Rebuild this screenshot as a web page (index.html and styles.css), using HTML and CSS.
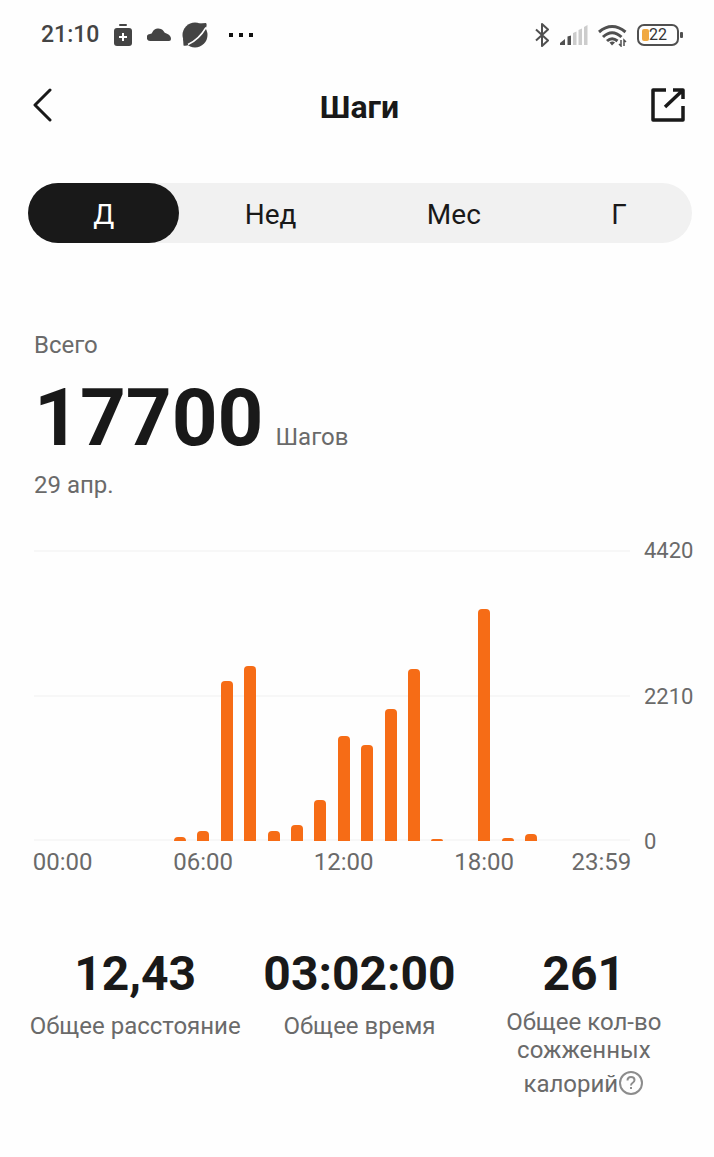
FILE: index.html
```html
<!DOCTYPE html>
<html lang="ru">
<head>
  <meta charset="UTF-8">
  <meta name="viewport" content="width=device-width, initial-scale=1.0">
  <title>Шаги</title>
  <link rel="stylesheet" href="styles.css">
</head>

<body>

  <div class="status-bar">
    <div class="status-left">
      <span class="time">21:10</span>
      <svg class="clip" width="18" height="22" viewBox="0 0 18 22">
        <rect x="5" y="0" width="8" height="2" rx="1" fill="#444"/>
        <rect x="0" y="4" width="18" height="18" rx="3" fill="#444"/>
        <path d="M9 9v8M5 13h8" stroke="#fff" stroke-width="2"/>
      </svg>
      <svg class="cloud" width="24" height="16" viewBox="0 0 24 16">
        <path d="M3.500 14a3.500 3.500 0 0 1-.5-7Q5 7 5.500 5A6.500 6.500 0 0 1 16.500 4Q17.500 6 19.500 6.500Q24 8 24 12Q24 14 22 14z" fill="#444"/>
      </svg>
      <svg width="26" height="26" viewBox="1 1 26 26">
        <circle cx="14" cy="14" r="12.500" fill="#444"/>
        <path d="M18 2.500l7-.5q1.500 1.500-.5 6zM2 17l.5 7.500q2 1 6-1z" fill="#444"/>
        <path d="M7 23.500Q18 18.500 25 6.500" fill="none" stroke="#fff" stroke-width="1.500"/>
      </svg>
      <svg class="dots" width="24" height="4" viewBox="0 0 24 4">
        <path d="M0 0h4v4H0zM10 0h4v4h-4zM20 0h4v4h-4z" fill="#111"/>
      </svg>
    </div>
    <div class="status-right">
      <svg width="16" height="24" viewBox="0 0 16 24">
        <path d="M2 6.500l12 11L8 23V1l6 5.500-12 11" fill="none" stroke="#505050" stroke-width="2" stroke-linejoin="round"/>
      </svg>
      <svg class="signal" width="28" height="20" viewBox="0 0 28 20">
        <path d="M0 20v-2l5-4v6zM7.500 11.500L11 10.500V20H7.500z" fill="#505050"/>
        <path d="M13 8l3.500-1.500V20H13zM18.500 5L22 3.500V20h-3.500zM24 2l3.500-2v20H24z" fill="#ccc"/>
      </svg>
      <svg class="wifi" width="29" height="23" viewBox="0 0 29 23">
        <g fill="none" stroke="#505050" stroke-width="3">
          <path d="M1 8Q14 -3 27.500 8"/>
          <path d="M5 13Q14 4.500 23.500 13"/>
          <path d="M9 17Q14 12.500 19.500 17"/>
        </g>
        <path d="M11.500 18.500q3-2 5.500 0L14 21.500z" fill="#505050"/>
        <path d="M23 16v6l-2-2M26 22v-6l2 2" fill="none" stroke="#505050" stroke-width="1.500"/>
      </svg>
      <span class="battery"><span class="battery-body"><span class="battery-level" style="width: 22%"></span><span class="battery-text">22</span></span></span>
    </div>
  </div>

  <header class="navbar">
    <button class="icon-button" type="button" aria-label="Назад">
      <svg width="20" height="34" viewBox="0 0 20 34">
        <path d="M17 2L2 17l15 15" fill="none" stroke="#191919" stroke-width="3" stroke-linecap="round" stroke-linejoin="round"/>
      </svg>
    </button>
    <h1>Шаги</h1>
    <button class="icon-button" type="button" aria-label="Поделиться">
      <svg width="34" height="34" viewBox="0 0 34 34">
        <path d="M15 2H2v30h30V18M22 2h10v9M32 2L14 19" fill="none" stroke="#191919" stroke-width="3.500" stroke-linejoin="round"/>
      </svg>
    </button>
  </header>

  <main>
    <nav class="tabs">
      <button class="tab active" type="button">Д</button>
      <button class="tab" type="button">Нед</button>
      <button class="tab" type="button">Мес</button>
      <button class="tab" type="button">Г</button>
    </nav>

    <section class="summary">
      <p>Всего</p>
      <div class="total"><strong>17700</strong> <span>Шагов</span></div>
      <p>29 апр.</p>
    </section>

    <section class="chart">
      <!-- one slot per hour -->
      <div class="plot">
        <div class="slot"></div>
        <div class="slot"></div>
        <div class="slot"></div>
        <div class="slot"></div>
        <div class="slot"></div>
        <div class="slot"><div class="bar" style="height: 1.4%"></div></div>
        <div class="slot"><div class="bar" style="height: 3.4%"></div></div>
        <div class="slot"><div class="bar" style="height: 55.1%"></div></div>
        <div class="slot"><div class="bar" style="height: 60%"></div></div>
        <div class="slot"><div class="bar" style="height: 3.4%"></div></div>
        <div class="slot"><div class="bar" style="height: 5.6%"></div></div>
        <div class="slot"><div class="bar" style="height: 14.2%"></div></div>
        <div class="slot"><div class="bar" style="height: 36%"></div></div>
        <div class="slot"><div class="bar" style="height: 33.1%"></div></div>
        <div class="slot"><div class="bar" style="height: 45.5%"></div></div>
        <div class="slot"><div class="bar" style="height: 59.2%"></div></div>
        <div class="slot"><div class="bar" style="height: 0.7%"></div></div>
        <div class="slot"></div>
        <div class="slot"><div class="bar" style="height: 79.8%"></div></div>
        <div class="slot"><div class="bar" style="height: 1%"></div></div>
        <div class="slot"><div class="bar" style="height: 2.3%"></div></div>
        <div class="slot"></div>
        <div class="slot"></div>
        <div class="slot"></div>
      </div>
      <div class="y-axis">
        <span>4420</span>
        <span>2210</span>
        <span>0</span>
      </div>
      <div class="x-axis">
        <span class="h0">00:00</span>
        <span class="h6">06:00</span>
        <span class="h12">12:00</span>
        <span class="h18">18:00</span>
        <span class="h23">23:59</span>
      </div>
    </section>

    <section class="stats">
      <div class="stat">
        <strong>12,43</strong>
        <p class="single">Общее расстояние</p>
      </div>
      <div class="stat">
        <strong>03:02:00</strong>
        <p class="single">Общее время</p>
      </div>
      <div class="stat">
        <strong>261</strong>
        <p>Общее кол-во сожженных калорий<button class="help" type="button" aria-label="Справка"><svg width="26" height="26" viewBox="0 0 26 26">
          <circle cx="13" cy="13" r="11" fill="none" stroke="#8c8c8c" stroke-width="2"/>
          <path d="M9.500 10.500q0-3.500 3.500-3.500t3.500 3q0 1.500-1.500 2.500-2 1.200-2 3" fill="none" stroke="#8c8c8c" stroke-width="2"/>
          <path d="M12 17h2v2h-2z" fill="#8c8c8c"/>
        </svg></button></p>
      </div>
    </section>
  </main>

</body>
</html>
```

FILE: styles.css
```css
:root {
  --text: #191919;
  --muted: #6a6a6a;
  --orange: #f66c16;
  --track: #f1f1f1;
  --line: #f7f7f7;
}

* {
  box-sizing: border-box;
}

body {
  margin: 0;
  background: #fefefe;
  color: var(--text);
  font-family: Roboto, "Noto Sans", sans-serif;
  font-size: 24px;
  line-height: 28px;
}

h1,
p {
  margin: 0;
}

button {
  padding: 0;
  border: 0;
  background: none;
  color: inherit;
  font: inherit;
  cursor: pointer;
}

svg {
  display: block;
}

/* --- Status bar --- */
.status-bar {
  display: flex;
  justify-content: space-between;
  align-items: center;
  height: 70px;
  padding: 0 31px 0 41px;
}

.status-left,
.status-right {
  display: flex;
  align-items: center;
}

.status-left {
  gap: 11px;
  color: #444;
}

.status-right {
  gap: 10px;
}

.time {
  font-size: 23px;
  font-weight: 500;
}

.status-left .clip,
.status-left .cloud {
  margin-left: 4px;
}

.status-left .dots {
  margin-left: 10px;
}

/* --- Battery --- */
.battery {
  display: flex;
  align-items: center;
  gap: 1px;
}

.battery::after {
  content: "";
  width: 3px;
  height: 6px;
  border-radius: 1px;
  background: #505050;
}

.battery-body {
  position: relative;
  width: 42px;
  height: 22px;
  padding: 3px;
  border: 2px solid #505050;
  border-radius: 7px;
}

.battery-level {
  display: block;
  height: 100%;
  border-radius: 2px;
  background: #f0a840;
}

.battery-text {
  position: absolute;
  inset: 0;
  color: #333;
  font-size: 16px;
  line-height: 18px;
  text-align: center;
}

/* --- Navigation --- */
.navbar {
  display: flex;
  justify-content: space-between;
  align-items: center;
  height: 70px;
  padding: 0 28px 0 33px;
}

.navbar h1 {
  padding-top: 3px;
  font-size: 32px;
  font-weight: 700;
  line-height: 40px;
}

.icon-button {
  display: flex;
  width: 35px;
}

/* --- Period tabs --- */
.tabs {
  display: flex;
  margin: 43px 22px 0 28px;
  border-radius: 30px;
  background: var(--track);
}

.tab {
  flex: 1 1 auto;
  height: 60px;
  padding-top: 3px;
  border-radius: 30px;
  font-size: 28px;
}

.tab.active {
  background: var(--text);
  color: #fff;
}

/* --- Total --- */
.summary {
  margin-top: 88px;
  padding: 0 34px;
  color: var(--muted);
}

.total {
  display: flex;
  align-items: baseline;
  gap: 12px;
  margin: 13px 0 7px;
}

.total strong {
  color: var(--text);
  font-size: 80px;
  line-height: 92px;
}

/* --- Chart --- */
.chart {
  display: grid;
  grid-template-columns: 1fr 48px;
  column-gap: 14px;
  margin-top: 51px;
  padding: 0 22px 0 34px;
  color: var(--muted);
}

.plot {
  display: flex;
  height: 291px;
  padding: 0 17px;
  background:
    linear-gradient(var(--line), var(--line)) 0 0 / 100% 2px no-repeat,
    linear-gradient(var(--line), var(--line)) 0 50% / 100% 2px no-repeat,
    linear-gradient(var(--line), var(--line)) 0 100% / 100% 2px no-repeat;
}

.slot {
  display: flex;
  flex: 1;
  justify-content: center;
  align-items: flex-end;
}

.bar {
  width: 12px;
  border-radius: 4px 4px 0 0;
  background: var(--orange);
}

.y-axis {
  display: flex;
  flex-direction: column;
  justify-content: space-between;
  margin: -13px 0 -15px;
  font-size: 22px;
}

.x-axis {
  display: grid;
  grid-template-columns: repeat(24, minmax(0, 1fr));
  justify-items: center;
  padding: 7px 17px 0;
}

.h0 { grid-column: 1; }
.h6 { grid-column: 7; }
.h12 { grid-column: 13; }
.h18 { grid-column: 19; }
.h23 { grid-column: 24; }

/* --- Stats --- */
.stats {
  display: grid;
  grid-template-columns: repeat(3, 1fr);
  margin-top: 70px;
  padding: 0 18px 56px 23px;
  text-align: center;
}

.stat strong {
  display: block;
  font-size: 48px;
  line-height: 56px;
}

.stat p {
  margin-top: 6px;
  color: var(--muted);
}

.stat .single {
  line-height: 36px;
}

.help {
  display: inline-block;
  padding-top: 6px;
  vertical-align: -4px;
}
```
